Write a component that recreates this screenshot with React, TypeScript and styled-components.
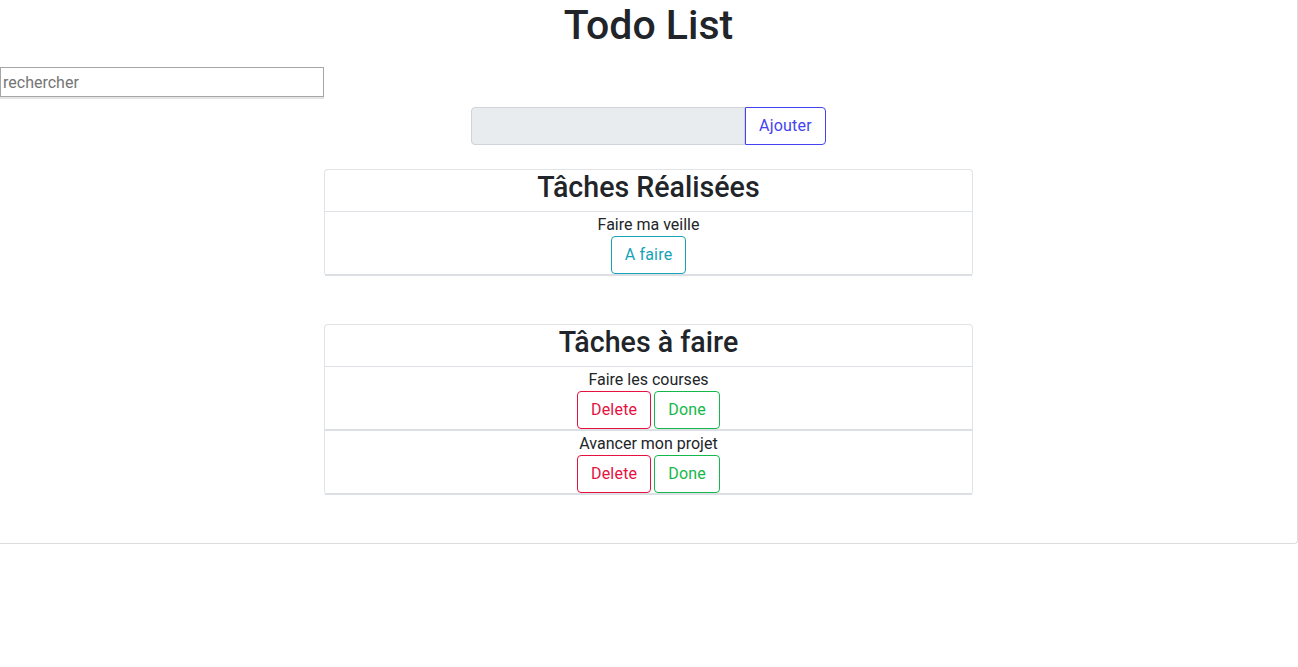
import React from "react";
import styled, { createGlobalStyle } from "styled-components";

const GlobalStyle = createGlobalStyle`
  html, body {
    margin: 0;
    padding: 0;
    background: #ffffff;
  }
  body {
    font-family: Roboto, "Liberation Sans", sans-serif;
    font-size: 16px;
    line-height: 1.5;
    color: #212529;
  }
  * { box-sizing: border-box; }
`;

const Page = styled.div`
  width: 1298px;
  background: #ffffff;
  border-right: 1px solid #dcdcdc;
  border-bottom: 1px solid #dcdcdc;
  border-bottom-right-radius: 4px;
  padding-bottom: 48px;
`;

const Title = styled.h1`
  margin: 0 0 17px;
  font-size: 41px;
  font-weight: 500;
  line-height: 50px;
  text-align: center;
  color: #212529;
`;

const Search = styled.input`
  display: block;
  width: 324px;
  height: 30px;
  margin: 0;
  padding: 1px 2px;
  border: 1px solid #a6a6a6;
  box-shadow: 0 2px 0 #e4e4e4;
  font-family: inherit;
  font-size: 16px;
  color: #212529;
  outline: none;
  &::placeholder {
    color: #757575;
  }
`;

const AddGroup = styled.div`
  display: flex;
  justify-content: center;
  margin: 10px 0 24px;
`;

const AddInput = styled.input`
  width: 274px;
  height: 38px;
  margin: 0;
  padding: 6px 12px;
  border: 1px solid #ced4da;
  border-radius: 4px 0 0 4px;
  background: #e9ecef;
  font-family: inherit;
  font-size: 16px;
  outline: none;
`;

const Btn = styled.button<{ $color: string; $attached?: boolean }>`
  height: 38px;
  padding: 6px 13px;
  border: 1px solid ${(p) => p.$color};
  border-radius: ${(p) => (p.$attached ? "0 4px 4px 0" : "4px")};
  background: #ffffff;
  color: ${(p) => p.$color};
  font-family: inherit;
  font-size: 16px;
  line-height: 24px;
  letter-spacing: 0.2px;
  cursor: pointer;
`;

const Card = styled.section<{ $gap?: number }>`
  width: 649px;
  margin: ${(p) => p.$gap ?? 0}px auto 0;
  border: 1px solid #e1e3e6;
  border-bottom: none;
  border-radius: 4px;
  background: #ffffff;
`;

const CardHeader = styled.h3`
  margin: 0;
  height: 42px;
  border-bottom: 1px solid #dee2e6;
  font-size: 28.6px;
  font-weight: 500;
  line-height: 35px;
  text-align: center;
  color: #212529;
`;

const Item = styled.div`
  display: flex;
  flex-direction: column;
  align-items: center;
  border-bottom: 2px solid #dcdfe3;
`;

const ItemLabel = styled.div`
  line-height: 24px;
  font-size: 16px;
  padding-top: 1px;
  margin-bottom: -1px;
`;

const Actions = styled.div`
  display: flex;
  gap: 3px;
`;

const colors = {
  primary: "#4344f0",
  info: "#17a2b8",
  danger: "#e5113f",
  success: "#14b84a",
};

const done = ["Faire ma veille"];
const todo = ["Faire les courses", "Avancer mon projet"];

export default function App() {
  return (
    <>
      <GlobalStyle />
      <Page>
        <Title>Todo List</Title>
        <Search placeholder="rechercher" />
        <AddGroup>
          <AddInput />
          <Btn $color={colors.primary} $attached>
            Ajouter
          </Btn>
        </AddGroup>

        <Card>
          <CardHeader>Tâches Réalisées</CardHeader>
          {done.map((t) => (
            <Item key={t}>
              <ItemLabel>{t}</ItemLabel>
              <Actions>
                <Btn $color={colors.info}>A faire</Btn>
              </Actions>
            </Item>
          ))}
        </Card>

        <Card $gap={48}>
          <CardHeader>Tâches à faire</CardHeader>
          {todo.map((t) => (
            <Item key={t}>
              <ItemLabel>{t}</ItemLabel>
              <Actions>
                <Btn $color={colors.danger}>Delete</Btn>
                <Btn $color={colors.success}>Done</Btn>
              </Actions>
            </Item>
          ))}
        </Card>
      </Page>
    </>
  );
}
